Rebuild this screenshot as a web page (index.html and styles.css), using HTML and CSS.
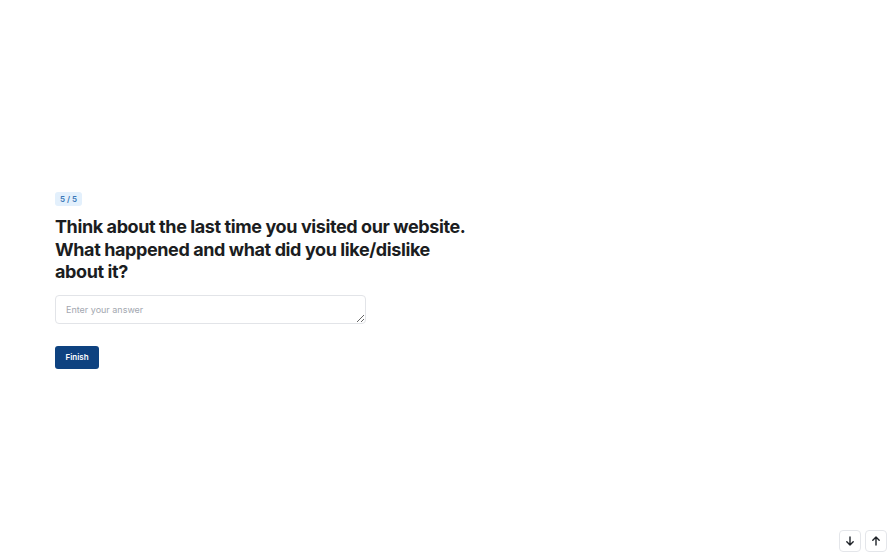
FILE: index.html
```html
<!DOCTYPE html>
<html lang="en">
<head>
<meta charset="utf-8">
<title>Survey</title>
<link rel="stylesheet" href="styles.css">
</head>
<body>
<main class="page">
  <section class="question">
    <span class="badge">5 / 5</span>
    <h1 class="title">Think about the last time you visited our website. What happened and what did you like/dislike about it?</h1>
    <textarea class="answer" placeholder="Enter your answer"></textarea>
    <button class="finish" type="button">Finish</button>
  </section>
</main>
<nav class="nav">
  <button class="nav-btn" type="button" aria-label="Next">
    <svg width="10" height="10" viewBox="0 0 10 10" fill="none" stroke="#1f2328" stroke-width="1.4" stroke-linecap="round" stroke-linejoin="round"><path d="M5 1v8M1.8 5.8L5 9l3.2-3.2"/></svg>
  </button>
  <button class="nav-btn" type="button" aria-label="Previous">
    <svg width="10" height="10" viewBox="0 0 10 10" fill="none" stroke="#1f2328" stroke-width="1.4" stroke-linecap="round" stroke-linejoin="round"><path d="M5 9V1M1.8 4.2L5 1l3.2 3.2"/></svg>
  </button>
</nav>
</body>
</html>
```

FILE: styles.css
```css
html, body {
  margin: 0;
  padding: 0;
  background: #ffffff;
}
body {
  font-family: Inter, "Noto Sans", sans-serif;
  color: #1b1d21;
}
.page {
  min-height: 560px;
  display: flex;
  flex-direction: column;
  justify-content: center;
  padding: 0 55px;
  box-sizing: border-box;
}
.question {
  display: flex;
  flex-direction: column;
  align-items: flex-start;
  margin-top: 1px;
}
.badge {
  display: inline-block;
  background: #e3f0fc;
  color: #3a78b8;
  font-size: 8px;
  font-weight: 600;
  line-height: 14px;
  padding: 0 5px;
  border-radius: 3px;
}
.title {
  margin: 10px 0 0;
  max-width: 420px;
  font-size: 18px;
  line-height: 22.5px;
  font-weight: 700;
  letter-spacing: -0.4px;
  color: #1b1d21;
}
.answer {
  margin-top: 11px;
  width: 311px;
  height: 29px;
  box-sizing: border-box;
  border: 1px solid #e2e4e8;
  border-radius: 4px;
  padding: 7px 10px;
  font-family: Inter, "Noto Sans", sans-serif;
  font-size: 9px;
  line-height: 13px;
  color: #1b1d21;
  resize: vertical;
  outline: none;
}
.answer::placeholder {
  color: #a3a7b0;
}
.finish {
  margin-top: 22px;
  width: 44px;
  height: 23px;
  border: none;
  border-radius: 3px;
  background: #0e4280;
  color: #ffffff;
  font-family: Inter, "Noto Sans", sans-serif;
  font-size: 8px;
  font-weight: 600;
  padding: 0;
  cursor: pointer;
}
.nav {
  position: fixed;
  right: 8px;
  bottom: 8px;
  display: flex;
  gap: 4px;
}
.nav-btn {
  width: 22px;
  height: 22px;
  padding: 0;
  border: 1px solid #e4e6ea;
  border-radius: 4px;
  background: #ffffff;
  display: flex;
  align-items: center;
  justify-content: center;
  cursor: pointer;
}
```
